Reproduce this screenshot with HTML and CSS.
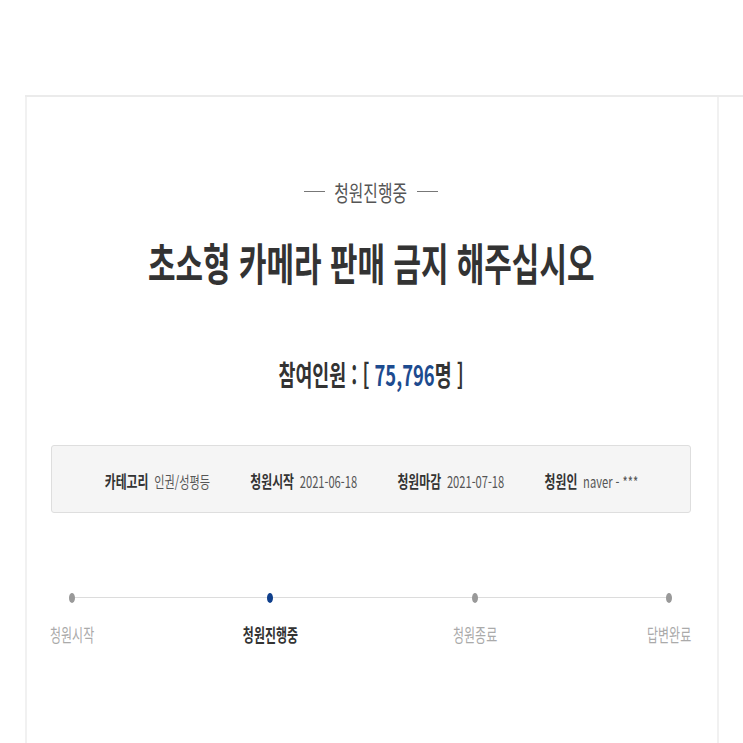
FILE: index.html
```html
<!DOCTYPE html>
<html lang="ko">
<head>
<meta charset="utf-8">
<title>청원진행중</title>
<link rel="stylesheet" href="styles.css">
</head>
<body>
<div class="page">
  <div class="frame">
    <main class="petition">
      <div class="status">
        <span class="dash"></span>
        <span class="status-text sq">청원진행중</span>
        <span class="dash"></span>
      </div>
      <h1 class="title"><span class="sq">초소형 카메라 판매 금지 해주십시오</span></h1>
      <div class="count"><span class="sq">참여인원 : [ <span class="num">75,796</span>명 ]</span></div>
      <div class="info">
        <ul class="info-row">
          <li><strong>카테고리</strong><span>인권/성평등</span></li>
          <li><strong>청원시작</strong><span>2021-06-18</span></li>
          <li><strong>청원마감</strong><span>2021-07-18</span></li>
          <li><strong>청원인</strong><span>naver - ***</span></li>
        </ul>
      </div>
      <ol class="steps">
        <li class="step"><i class="dot"></i><span class="label sq">청원시작</span></li>
        <li class="step step-2 active"><i class="dot"></i><span class="label sq">청원진행중</span></li>
        <li class="step step-3"><i class="dot"></i><span class="label sq">청원종료</span></li>
        <li class="step step-4"><i class="dot"></i><span class="label sq">답변완료</span></li>
      </ol>
    </main>
    <aside class="side"></aside>
  </div>
</div>
</body>
</html>
```

FILE: styles.css
```css
html, body {
  margin: 0;
  padding: 0;
  background: #fff;
  overflow: hidden;
  height: 743px;
}
body {
  font-family: "Noto Sans CJK KR", "Noto Sans", sans-serif;
  color: #333;
}
.page {
  padding: 95px 0 0 25px;
}
.frame {
  display: flex;
  width: 1000px;
  min-height: 900px;
  border-top: 2px solid #ebebeb;
}
.petition {
  width: 640px;
  flex: none;
  border-left: 2px solid #f1f1f1;
  border-right: 2px solid #f1f1f1;
  padding: 83px 26px 0 24px;
  display: flex;
  flex-direction: column;
  align-items: stretch;
}
.side {
  flex: 1;
}
.sq {
  display: inline-block;
  white-space: nowrap;
  transform-origin: 50% 50%;
}
.status {
  display: flex;
  justify-content: center;
  align-items: center;
  gap: 10px;
  height: 22px;
}
.dash {
  width: 21px;
  height: 0;
  border-top: 1px solid #777;
}
.status-text {
  font-size: 22px;
  line-height: 22px;
  color: #555;
  transform: scaleX(0.72);
  margin: 0 -15px;
}
.title {
  margin: 38px 0 0;
  display: flex;
  justify-content: center;
  font-size: 44px;
  line-height: 44px;
  font-weight: 700;
  color: #333;
}
.title .sq {
  flex: none;
  transform: scaleX(0.68);
}
.count {
  margin-top: 76px;
  text-align: center;
  font-size: 28px;
  line-height: 28px;
  font-weight: 700;
  color: #333;
}
.count .sq {
  transform: scaleX(0.656);
}
.num {
  color: #1d4b8f;
}
.info {
  margin-top: 57px;
  height: 68px;
  box-sizing: border-box;
  padding-top: 4px;
  border: 1px solid #dedede;
  border-radius: 3px;
  background: #f5f5f5;
  display: flex;
  justify-content: center;
  align-items: center;
}
.info-row {
  list-style: none;
  margin: 0;
  padding: 0;
  display: flex;
  align-items: baseline;
  gap: 56px;
  line-height: 17px;
  white-space: nowrap;
  transform: scaleX(0.72);
}
.info-row li {
  display: flex;
  align-items: baseline;
  gap: 8px;
}
.info-row strong {
  font-size: 16.5px;
  font-weight: 700;
  color: #333;
}
.info-row span {
  font-size: 15.5px;
  color: #555;
}
.steps {
  list-style: none;
  margin: 80px 0 0;
  padding: 0 19px 0 18px;
  display: flex;
  background: linear-gradient(#dcdcdc, #dcdcdc) no-repeat 0 4px / 100% 1px;
  background-origin: content-box;
}
.step {
  width: 6px;
  flex: none;
  display: flex;
  flex-direction: column;
  align-items: center;
}
.step-2 {
  margin-left: 192px;
}
.step-3 {
  margin-left: 199px;
}
.step-4 {
  margin-left: 188px;
}
.dot {
  width: 6px;
  height: 10px;
  border-radius: 50%;
  background: #999;
}
.step.active .dot {
  background: #0f3f8c;
}
.label {
  margin-top: 22px;
  font-size: 18px;
  line-height: 18px;
  color: #aaa;
  transform: scaleX(0.665);
}
.step.active .label {
  color: #333;
  font-weight: 700;
}
```
